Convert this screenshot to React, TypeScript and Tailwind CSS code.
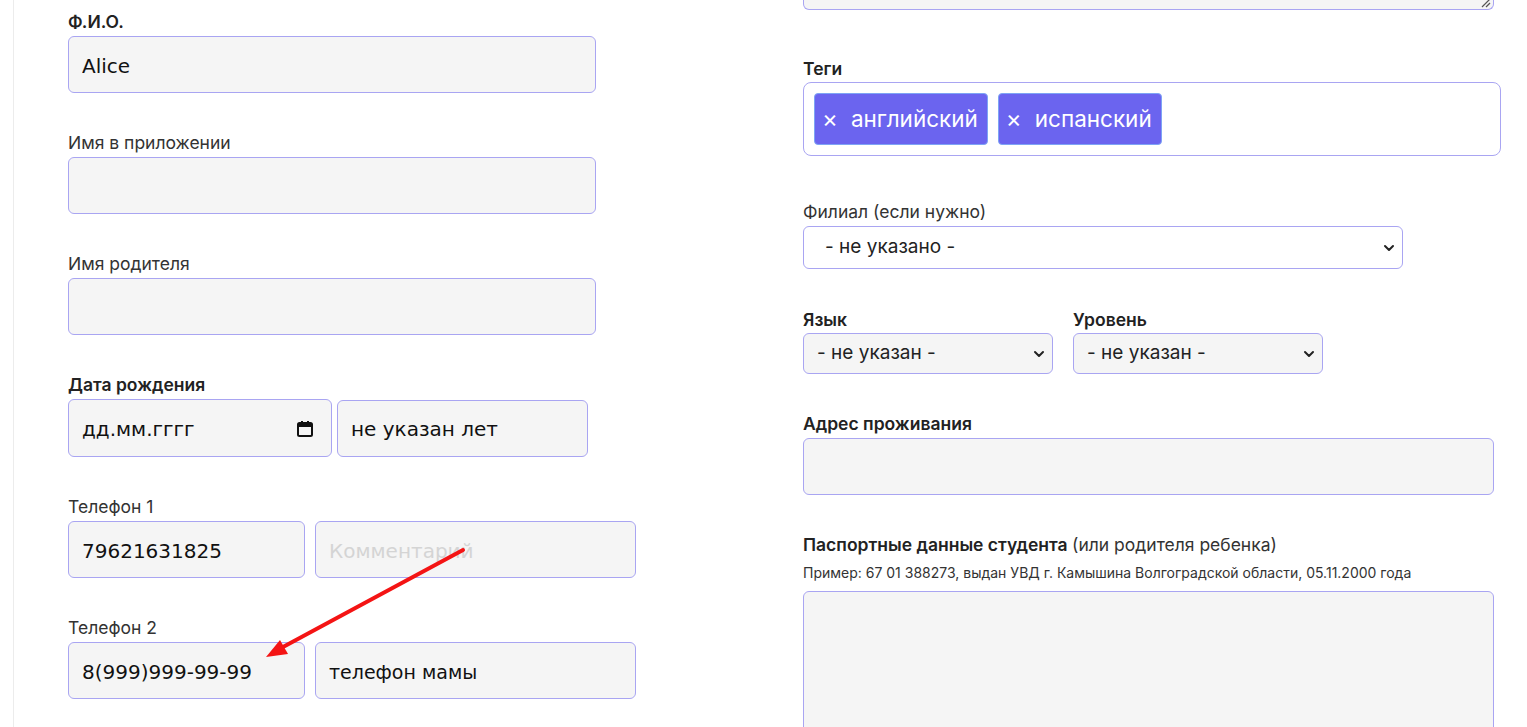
import { ChevronDown } from "lucide-react";

const labelBold = "block h-6 text-[17.5px] leading-6 font-semibold text-[#222]";
const labelNormal = "block h-6 text-[17.5px] leading-6 font-normal text-[#333]";
const inputBox =
  "h-[57px] rounded-md border border-[#a9a5f2] bg-[#f5f5f5] px-[13px] pt-[2px] text-[#111] outline-none placeholder:text-[#d4d4d4]";
const inputBase = `${inputBox} text-[20px]`;
const inputFont = { fontFamily: '"DejaVu Sans", Verdana, sans-serif' };

const Field = ({ label, bold, value }: { label: string; bold?: boolean; value?: string }) => (
  <div className="mb-[38px]">
    <span className={bold ? labelBold : labelNormal}>{label}</span>
    <input readOnly defaultValue={value} className={`${inputBase} mt-[2px] w-[528px]`} style={inputFont} />
  </div>
);

const Select = ({ text, className }: { text: string; className: string }) => (
  <div className={`relative flex items-center rounded-md border border-[#a9a5f2] text-[19px] text-[#222] ${className}`}>
    <span>{text}</span>
    <ChevronDown className="absolute right-[5px] top-1/2 h-[16px] w-[16px] -translate-y-1/2 text-[#222]" strokeWidth={3} />
  </div>
);

export default function App() {
  return (
    <div className="relative h-[727px] w-[1527px] overflow-hidden bg-white" style={{ fontFamily: "Inter, sans-serif" }}>
      <div className="ml-[13px] flex h-full border-l border-[#ececec]">
        {/* left column */}
        <div className="ml-[54px] w-[570px] pt-[10px]">
          <Field label="Ф.И.О." bold value="Alice" />
          <Field label="Имя в приложении" />
          <Field label="Имя родителя" />

          <div className="mb-[38px]">
            <span className={labelBold}>Дата рождения</span>
            <div className="mt-[2px] flex items-center gap-[5px]">
              <div className={`${inputBase} flex h-[58px] w-[264px] items-center justify-between`} style={inputFont}>
                <span>дд.мм.гггг</span>
                <svg width="18" height="18" viewBox="0 0 18 18" className="mr-[4px]">
                  <rect x="2" y="3" width="14" height="13" rx="1.5" fill="none" stroke="#111" strokeWidth="2" />
                  <rect x="2" y="3" width="14" height="4" fill="#111" />
                  <rect x="5" y="1" width="2" height="3" fill="#111" />
                  <rect x="11" y="1" width="2" height="3" fill="#111" />
                </svg>
              </div>
              <input readOnly defaultValue="не указан лет" className={`${inputBase} h-[56px] w-[251px]`} style={inputFont} />
            </div>
          </div>

          <div className="mb-[38px]">
            <span className={labelNormal}>Телефон 1</span>
            <div className="mt-[2px] flex gap-[10px]">
              <input readOnly defaultValue="79621631825" className={`${inputBase} w-[237px]`} style={inputFont} />
              <input readOnly placeholder="Комментарий" className={`${inputBase} w-[321px]`} style={inputFont} />
            </div>
          </div>

          <div>
            <span className={labelNormal}>Телефон 2</span>
            <div className="mt-[2px] flex gap-[10px]">
              <input readOnly defaultValue="8(999)999-99-99" className={`${inputBase} w-[237px]`} style={inputFont} />
              <input readOnly defaultValue="телефон мамы" className={`${inputBox} w-[321px] text-[19px]`} style={inputFont} />
            </div>
          </div>
        </div>

        {/* right column */}
        <div className="ml-[165px] w-[698px]">
          <div className="relative h-[10px] w-[691px] rounded-b-md border-x border-b border-[#a9a5f2] bg-[#f5f5f5]">
            <svg width="10" height="10" viewBox="0 0 10 10" className="absolute bottom-[1px] right-[2px]">
              <line x1="9" y1="1" x2="1" y2="9" stroke="#555" strokeWidth="1.2" />
              <line x1="9" y1="5" x2="5" y2="9" stroke="#555" strokeWidth="1.2" />
            </svg>
          </div>

          <div className="mt-[47px]">
            <span className={labelBold}>Теги</span>
            <div className="mt-[1px] flex h-[74px] items-center gap-[10px] rounded-lg border border-[#a9a5f2] bg-white px-[10px]">
              {["английский", "испанский"].map((t) => (
                <div
                  key={t}
                  className="flex h-[52px] items-center gap-[13px] rounded-[4px] border border-[#7ea4f5] bg-[#6b64ef] pl-[7px] pr-[9px] text-[22.5px] text-white"
                >
                  <span className="text-[24px] leading-none">×</span>
                  <span>{t}</span>
                </div>
              ))}
            </div>
          </div>

          <div className="mt-[44px]">
            <span className={labelNormal}>Филиал (если нужно)</span>
            <Select text="- не указано -" className="mt-[2px] h-[43px] w-[600px] bg-white pl-[21px]" />
          </div>

          <div className="mt-[39px] flex gap-[20px]">
            <div>
              <span className={labelBold}>Язык</span>
              <Select text="- не указан -" className="mt-[1px] h-[41px] w-[250px] bg-[#f5f5f5] pl-[13px]" />
            </div>
            <div>
              <span className={labelBold}>Уровень</span>
              <Select text="- не указан -" className="mt-[1px] h-[41px] w-[250px] bg-[#f5f5f5] pl-[13px]" />
            </div>
          </div>

          <div className="mt-[38px]">
            <span className={labelBold}>Адрес проживания</span>
            <div className="mt-[2px] h-[57px] w-[691px] rounded-md border border-[#a9a5f2] bg-[#f5f5f5]" />
          </div>

          <div className="mt-[38px]">
            <span className={labelBold}>
              Паспортные данные студента <span className="font-normal text-[#333]">(или родителя ребенка)</span>
            </span>
            <p className="mt-[7px] text-[14px] leading-[18px] text-[#333]">
              Пример: 67 01 388273, выдан УВД г. Камышина Волгоградской области, 05.11.2000 года
            </p>
            <div className="mt-[9px] h-[160px] w-[691px] rounded-md border border-[#a9a5f2] bg-[#f5f5f5]" />
          </div>
        </div>
      </div>

      {/* red annotation arrow */}
      <svg className="pointer-events-none absolute left-0 top-0" width="1527" height="727">
        <line x1="463" y1="550" x2="283" y2="647" stroke="#f41414" strokeWidth="4" strokeLinecap="round" />
        <polygon points="266,657 280,640 288,654" fill="#f41414" />
      </svg>
    </div>
  );
}
